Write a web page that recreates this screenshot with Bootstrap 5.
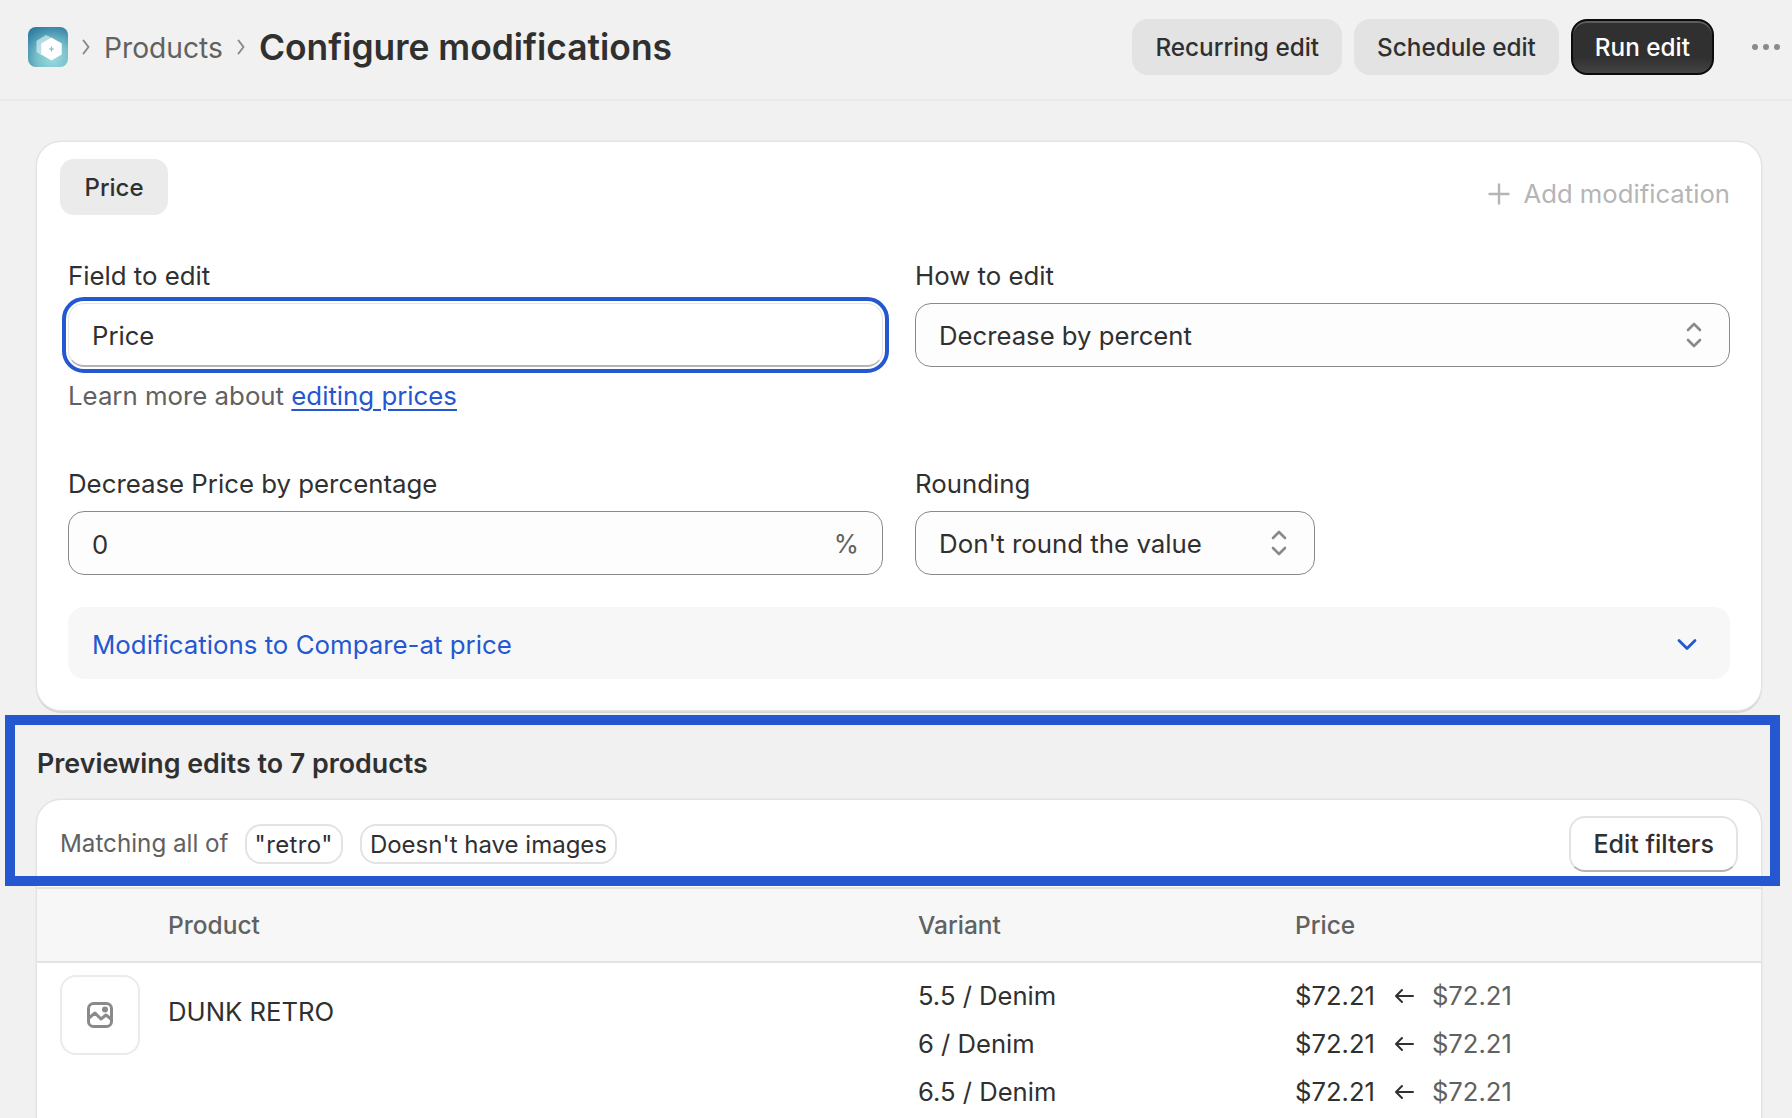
<!DOCTYPE html>
<html lang="en">
<head>
<meta charset="utf-8">
<title>Configure modifications</title>
<link href="https://cdn.jsdelivr.net/npm/bootstrap@5.3.0/dist/css/bootstrap.min.css" rel="stylesheet">
<style>
html,body{height:1118px;overflow:hidden}
body{background:#f1f1f1;color:#303030;font-family:Inter,"Liberation Sans",sans-serif;font-size:25.7px;line-height:40px;position:relative}
.app-header{height:101px;border-bottom:2px solid #ebebeb;padding:0 12px 5px 28px}
.app-logo{width:40px;height:40px;border-radius:8px;background:radial-gradient(circle at 62% 78%,#9bdbdf 0%,#79c0cb 40%,#3f8cab 75%,#2b6c92 100%);flex:none}
.crumb-sep{margin:0 14px}
.crumb-link{font-size:28.2px;color:#616161;margin-top:2px}
.page-title{font-size:35.4px;font-weight:600;line-height:48px;margin:2px 0 0;color:#303030}
.head-btn{height:56px;border-radius:16px;font-size:24.3px;font-weight:500;padding:0 23px;border:0;background:#e3e3e3;color:#303030;line-height:56px}
.head-btn.dark-btn{background:linear-gradient(#303030 70%,#444);color:#fff;border:2px solid #0c0c0c;box-shadow:inset 0 2px 0 #5c5c5c;padding:0 22px;line-height:52px}
.dots-btn{margin-left:38px}
.page-main{padding:41px 31px 0 37px}
.panel-card{border:0;border-radius:24px;background:#fff;box-shadow:0 0 0 1.5px #e3e3e3,0 2px 0 1px #d4d4d4}
.edit-card{padding:17px 31px 31px 31px;height:568px}
.tab-row{margin-left:-8px;margin-bottom:41px}
.tab-pill{height:56px;width:108px;border-radius:14px;background:#ebebeb;font-weight:500;font-size:24px;line-height:58px;text-align:center}
.add-mod{color:#b5b5b5;margin-top:15px;line-height:40px}
.plus-ico{margin-right:13px}
.field-row{--bs-gutter-x:32px}
.field-label{display:block;margin-bottom:7px;line-height:40px;font-size:25.8px}
.field-input,.field-select{height:64px;border:1px solid #8a8a8a;border-radius:16px;background-color:#fdfdfd;font-size:25.7px;color:#303030;padding:2px 23px 0;line-height:40px}
.field-select{background-image:url("data:image/svg+xml,%3Csvg xmlns='http://www.w3.org/2000/svg' viewBox='0 0 16 28' fill='none' stroke='%238a8a8a' stroke-width='2.6' stroke-linecap='round' stroke-linejoin='round'%3E%3Cpath d='M2 9 8 3l6 6M2 19l6 6 6-6'/%3E%3C/svg%3E");background-size:16px 28px;background-position:right 27px center;padding-right:60px}
.focus-input{border-color:#e3e3e3 #e3e3e3 #b5b5b5;border-bottom-width:2px;background:#fff;outline:4px solid #2457d0;outline-offset:2px}
.help-line{margin-top:9px;margin-bottom:48px;color:#616161;line-height:40px;font-size:25.8px}
.help-line a{color:#2457d0;text-underline-offset:4px}
.pct-wrap{position:relative}
.pct-sign{position:absolute;right:24px;top:13px;color:#616161;pointer-events:none}
.round-select{width:400px;font-size:25.85px}
.compare-bar{height:72px;margin-top:32px;border-radius:16px;background:#f7f7f7;padding:3px 33px 0 24px;color:#2457d0;font-size:25.85px}
.preview-title{font-size:26.8px;font-weight:600;line-height:40px;margin:33px 0 17px}
.preview-card{height:600px;overflow:hidden}
.filter-bar{height:89px;border-bottom:2px solid #e3e3e3;padding:0 23px}
.filter-label{color:#616161;font-size:24.2px;margin-right:16px}
.chip-tag{height:40px;line-height:37px;border:2px solid #e3e3e3;border-radius:16px;padding:0 8px;font-size:24px;margin-right:17px}
.chip-quoted{letter-spacing:.4px}
.filter-btn{margin-left:auto;height:56px;border-radius:16px;background:#fff;border:2px solid #e3e3e3;border-bottom-color:#b5b5b5;font-size:25px;font-weight:500;color:#303030;padding:0 22px;line-height:50px}
.prod-table{table-layout:fixed;margin:0;--bs-table-bg:transparent;color:#303030}
.prod-table th{background:#f7f7f7;height:73px;border-bottom:2px solid #e3e3e3;font-weight:500;color:#616161;font-size:24.5px;padding:0;vertical-align:middle}
.prod-table td{border:0;padding:12px 0 0;vertical-align:top}
.thumb-box{width:80px;height:80px;margin-left:23px;border:2px solid #ebebeb;border-radius:16px}
.prod-name{padding-top:17px;line-height:40px}
.val-line{line-height:48px;font-size:25.6px}
.val-first{margin-top:-3px}
.old-val{color:#616161}
.arrow-ico{margin:0 18px 0 19px}
.hl-box{position:absolute;left:5px;top:715px;width:1775px;height:171px;border:10px solid #2457d0;pointer-events:none}
</style>
</head>
<body>
<header class="app-header d-flex align-items-center">
  <svg class="app-logo" viewBox="0 0 40 40"><path d="M18 8.500 9 14v11l5 3V16l9-5z" fill="#d5eef2" opacity=".7" stroke="#d5eef2" stroke-width="1" stroke-linejoin="round"/><path d="M23.500 11.500 33 17v10l-9.500 5.500L14 27V17z" fill="#fff" stroke="#fff" stroke-width="1.500" stroke-linejoin="round"/><path d="M23.500 20v4M21.500 22h4" stroke="#6cc4d0" stroke-width="1.200" stroke-linecap="round"/></svg>
  <svg class="crumb-sep" width="8" height="18" viewBox="0 0 8 18" fill="none" stroke="#8a8a8a" stroke-width="2" stroke-linecap="round" stroke-linejoin="round"><path d="M1.500 2.500 6.500 9l-5 6.500"/></svg>
  <span class="crumb-link">Products</span>
  <svg class="crumb-sep" width="8" height="18" viewBox="0 0 8 18" fill="none" stroke="#8a8a8a" stroke-width="2" stroke-linecap="round" stroke-linejoin="round"><path d="M1.500 2.500 6.500 9l-5 6.500"/></svg>
  <h1 class="page-title">Configure modifications</h1>
  <div class="ms-auto d-flex align-items-center gap-2">
    <button class="btn head-btn" type="button">Recurring edit</button>
    <button class="btn head-btn ms-1" type="button">Schedule edit</button>
    <button class="btn head-btn dark-btn ms-1" type="button">Run edit</button>
  </div>
  <svg class="dots-btn" width="28" height="6" viewBox="0 0 28 6" fill="#8a8a8a"><circle cx="3" cy="3" r="3"/><circle cx="14" cy="3" r="3"/><circle cx="25" cy="3" r="3"/></svg>
</header>

<main class="page-main">
  <section class="card panel-card edit-card">
    <div class="tab-row d-flex justify-content-between align-items-start">
      <div class="tab-pill">Price</div>
      <div class="add-mod d-flex align-items-center">
        <svg class="plus-ico" width="22" height="22" viewBox="0 0 22 22" fill="none" stroke="#b5b5b5" stroke-width="2.400" stroke-linecap="round"><path d="M11 1.500v19M1.500 11h19"/></svg>
        Add modification
      </div>
    </div>
    <div class="row field-row">
      <div class="col-6">
        <label class="field-label" for="f1">Field to edit</label>
        <input id="f1" class="form-control field-input focus-input" value="Price">
        <div class="help-line">Learn more about <a href="#">editing prices</a></div>
      </div>
      <div class="col-6">
        <label class="field-label" for="f2">How to edit</label>
        <select id="f2" class="form-select field-select"><option>Decrease by percent</option></select>
      </div>
      <div class="col-6">
        <label class="field-label" for="f3">Decrease Price by percentage</label>
        <div class="pct-wrap">
          <input id="f3" class="form-control field-input" value="0">
          <span class="pct-sign">%</span>
        </div>
      </div>
      <div class="col-6">
        <label class="field-label" for="f4">Rounding</label>
        <select id="f4" class="form-select field-select round-select"><option>Don't round the value</option></select>
      </div>
    </div>
    <div class="compare-bar d-flex align-items-center justify-content-between">
      <span>Modifications to Compare-at price</span>
      <svg width="20" height="13" viewBox="0 0 20 13" fill="none" stroke="#2457d0" stroke-width="2.800" stroke-linecap="round" stroke-linejoin="round"><path d="M2 2.500 10 10.500 18 2.500"/></svg>
    </div>
  </section>

  <h2 class="preview-title">Previewing edits to 7 products</h2>

  <section class="card panel-card preview-card">
    <div class="filter-bar d-flex align-items-center">
      <span class="filter-label">Matching all of</span>
      <span class="chip-tag chip-quoted">"retro"</span>
      <span class="chip-tag">Doesn't have images</span>
      <button class="btn filter-btn" type="button">Edit filters</button>
    </div>
    <table class="table prod-table">
      <colgroup><col style="width:131px"><col style="width:750px"><col style="width:377px"><col></colgroup>
      <thead><tr><th></th><th>Product</th><th>Variant</th><th>Price</th></tr></thead>
      <tbody>
        <tr>
          <td>
            <div class="thumb-box d-flex align-items-center justify-content-center">
              <svg width="26" height="26" viewBox="0 0 26 26" fill="none" stroke="#8a8a8a" stroke-width="3" stroke-linejoin="round"><rect x="1.500" y="1.500" width="23" height="23" rx="5"/><path d="M2 16l6-5 6 6 5-4 5 4" stroke-linecap="round"/><circle cx="18" cy="7.500" r="3" fill="#8a8a8a" stroke="none"/></svg>
            </div>
          </td>
          <td><div class="prod-name">DUNK RETRO</div></td>
          <td>
            <div class="val-line val-first">5.5 / Denim</div>
            <div class="val-line">6 / Denim</div>
            <div class="val-line">6.5 / Denim</div>
          </td>
          <td>
            <div class="val-line val-first d-flex align-items-center">$72.21<svg class="arrow-ico" width="20" height="16" viewBox="0 0 20 16" fill="none" stroke="#303030" stroke-width="2" stroke-linecap="round" stroke-linejoin="round"><path d="M19 8H2M8 2 2 8l6 6"/></svg><span class="old-val">$72.21</span></div>
            <div class="val-line d-flex align-items-center">$72.21<svg class="arrow-ico" width="20" height="16" viewBox="0 0 20 16" fill="none" stroke="#303030" stroke-width="2" stroke-linecap="round" stroke-linejoin="round"><path d="M19 8H2M8 2 2 8l6 6"/></svg><span class="old-val">$72.21</span></div>
            <div class="val-line d-flex align-items-center">$72.21<svg class="arrow-ico" width="20" height="16" viewBox="0 0 20 16" fill="none" stroke="#303030" stroke-width="2" stroke-linecap="round" stroke-linejoin="round"><path d="M19 8H2M8 2 2 8l6 6"/></svg><span class="old-val">$72.21</span></div>
          </td>
        </tr>
      </tbody>
    </table>
  </section>
</main>
<div class="hl-box"></div>
<script src="https://cdn.jsdelivr.net/npm/bootstrap@5.3.0/dist/js/bootstrap.bundle.min.js"></script>
</body>
</html>
